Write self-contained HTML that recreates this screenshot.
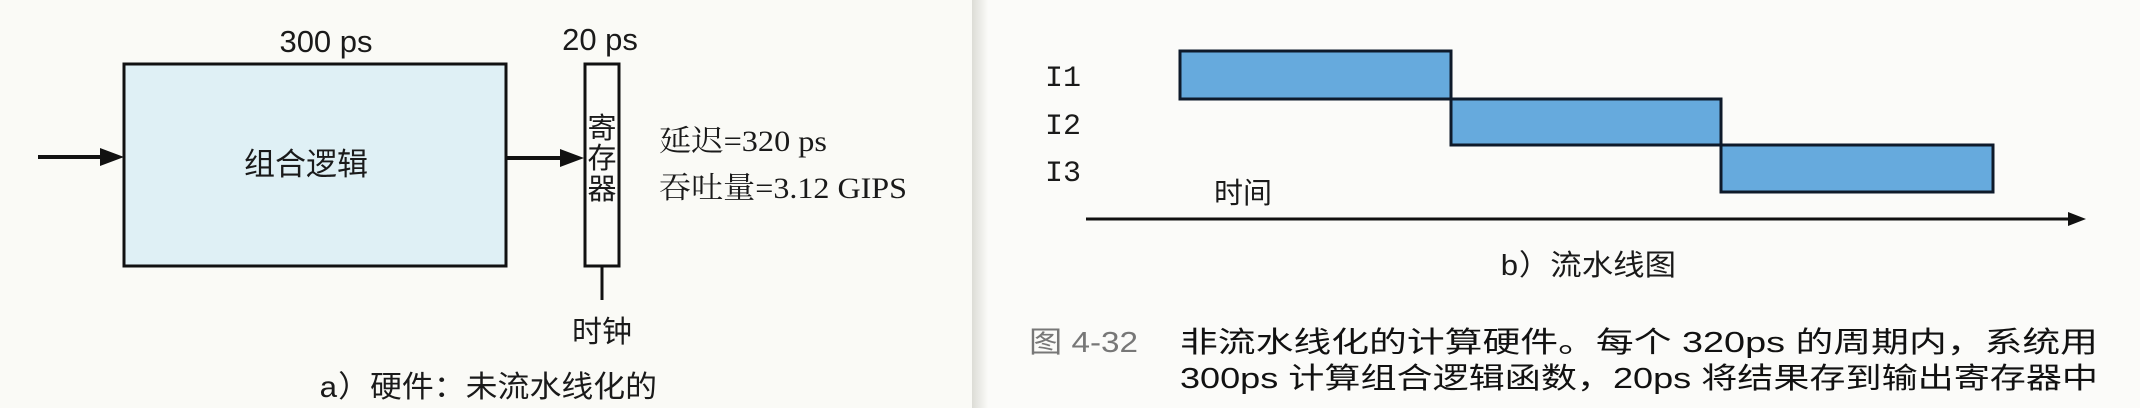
<!DOCTYPE html>
<html><head><meta charset="utf-8"><style>
html,body{margin:0;padding:0;background:#fafaf6;}
svg{display:block}
text{font-family:"Liberation Sans","Noto Sans CJK SC",sans-serif;fill:#1a1a1a}
.serif{font-family:"Liberation Serif","Noto Serif CJK SC",serif}
.mono{font-family:"Liberation Mono","Noto Sans CJK SC",monospace}
</style></head><body>
<svg width="2140" height="408" viewBox="0 0 2140 408" xmlns="http://www.w3.org/2000/svg">
<defs>
<linearGradient id="gut" x1="0" x2="1" y1="0" y2="0">
<stop offset="0" stop-color="#dcdcd6"/><stop offset="1" stop-color="#fbfbf8"/>
</linearGradient>
</defs>
<rect x="0" y="0" width="2140" height="408" fill="#fafaf6"/>
<rect x="972" y="0" width="16" height="408" fill="url(#gut)"/>
<rect x="988" y="0" width="1152" height="408" fill="#fbfbf9"/>

<!-- left diagram -->
<text x="326" y="52" font-size="31" text-anchor="middle">300 ps</text>
<rect x="124" y="64" width="382" height="202" fill="#dff0f5" stroke="#111" stroke-width="3"/>
<text x="306" y="175" font-size="31" text-anchor="middle">组合逻辑</text>
<line x1="38" y1="157" x2="104" y2="157" stroke="#111" stroke-width="4"/>
<polygon points="100,148 124,157 100,166" fill="#111"/>
<line x1="506" y1="158" x2="564" y2="158" stroke="#111" stroke-width="4"/>
<polygon points="560,149 584,158 560,167" fill="#111"/>
<text x="600" y="50" font-size="31" text-anchor="middle">20 ps</text>
<rect x="585" y="64" width="34" height="202" fill="#fbfbf8" stroke="#111" stroke-width="3"/>
<text x="602" y="138" font-size="29" text-anchor="middle">寄</text>
<text x="602" y="168" font-size="29" text-anchor="middle">存</text>
<text x="602" y="199" font-size="29" text-anchor="middle">器</text>
<line x1="602" y1="266" x2="602" y2="300" stroke="#111" stroke-width="3"/>
<text x="602" y="342" font-size="30" text-anchor="middle">时钟</text>
<text class="serif" x="659" y="151" font-size="30" textLength="168" lengthAdjust="spacingAndGlyphs">延迟=320 ps</text>
<text class="serif" x="659" y="198" font-size="30" textLength="248" lengthAdjust="spacingAndGlyphs">吞吐量=3.12 GIPS</text>
<text class="mono" x="319" y="397" font-size="30" textLength="338" lengthAdjust="spacingAndGlyphs">a）硬件：未流水线化的</text>

<!-- right diagram -->
<text x="1045" y="86" font-size="30" style="font-family:'Liberation Mono',monospace">I1</text>
<text x="1045" y="134" font-size="30" style="font-family:'Liberation Mono',monospace">I2</text>
<text x="1045" y="181" font-size="30" style="font-family:'Liberation Mono',monospace">I3</text>
<rect x="1180" y="51" width="271" height="48" fill="#66aadd" stroke="#0e1a2a" stroke-width="3"/>
<rect x="1451" y="99" width="270" height="46" fill="#66aadd" stroke="#0e1a2a" stroke-width="3"/>
<rect x="1721" y="145" width="272" height="47" fill="#66aadd" stroke="#0e1a2a" stroke-width="3"/>
<text x="1214" y="203" font-size="29">时间</text>
<line x1="1086" y1="219" x2="2072" y2="219" stroke="#111" stroke-width="3"/>
<polygon points="2068,212 2086,219 2068,226" fill="#111"/>
<text class="mono" x="1500" y="275" font-size="29" textLength="176" lengthAdjust="spacingAndGlyphs">b）流水线图</text>

<text x="1029" y="352" font-size="29" style="fill:#777" textLength="109" lengthAdjust="spacingAndGlyphs">图 4-32</text>
<text x="1180" y="352" font-size="29" style="fill:#111" textLength="918" lengthAdjust="spacingAndGlyphs">非流水线化的计算硬件。每个 320ps 的周期内，系统用</text>
<text x="1180" y="388" font-size="29" style="fill:#111" textLength="918" lengthAdjust="spacingAndGlyphs">300ps 计算组合逻辑函数，20ps 将结果存到输出寄存器中</text>
</svg>
</body></html>
